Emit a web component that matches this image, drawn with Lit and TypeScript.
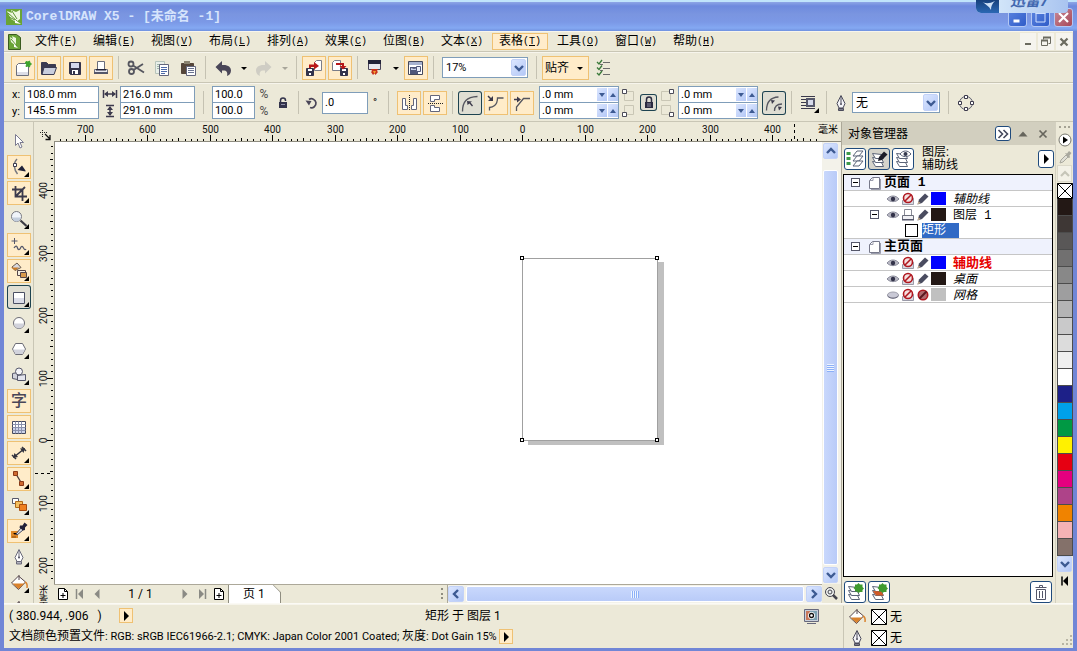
import { LitElement, html, svg, css, nothing } from "lit";
import { customElement, property, state } from "lit/decorators.js";
import { classMap } from "lit/directives/class-map.js";
import { styleMap } from "lit/directives/style-map.js";

const FLY = svg`<path d="M22 17v5h-5z" fill="#000"/>`;

const LAYERS = svg`<g fill="#fff" stroke="#5b6478" stroke-width="1">
  <path d="M5.500 14.500l3 5h8l-2-4z"/><path d="M5.500 10.500l3 5h8l-2-4z"/><path d="M5.500 6.500l3 5h8l-2-4z"/></g>`;

const STAR = svg`<path d="M15.500 3l1.500 1.500h2.500v2.500l1.500 1.500-1.500 1.500v2h-2.500L15.500 13l-1.500-1.500h-2v-2L10.500 8l1.500-1.500v-2h2z" fill="#3f9a2e"/>`;

const ICONS: Record<string, unknown> = {
  // standard toolbar
  new: svg`<path d="M5.500 9.500l2-2h10v12h-12z" fill="#fff" stroke="#6c6f7c"/><path d="M6 16h11v3H6z" fill="#dcdde6"/><path d="M15 5.500l2 .500 1.500-1 .500 2 1.500 1-1.500 1-.500 2-1.500-1-2 .500.500-2-1-1.500z" fill="#3da32c" stroke="#3da32c"/>`,
  open: svg`<path d="M4.500 18.500v-12h5l2 2h7v4" fill="#3a3a52" stroke="#3a3a52"/><path d="M5 18.500l2-7h12.500l-2.500 7z" fill="#c9cede" stroke="#3a3a52"/>`,
  save: svg`<path d="M6.500 6.500h11v12h-10l-1-1z" fill="#34344c" stroke="#34344c"/><path d="M8 7h8v5H8z" fill="#d4d8ee"/><path d="M9 14h6v4H9z" fill="#fff"/><path d="M10 15h2v3h-2z" fill="#34344c"/>`,
  print: svg`<path d="M8.500 14V5.500h7V14" fill="#fff" stroke="#6c6f7c"/><path d="M5.500 13.500h13v4h-13z" fill="#e8e8ee" stroke="#6c6f7c"/><path d="M5 16h14v2H5z" fill="#55576a"/><path d="M7 13h10v1.500H7z" fill="#24243a"/>`,
  cut: svg`<g fill="none" stroke="#55565f" stroke-width="1.800"><circle cx="7" cy="8" r="2.500"/><circle cx="7.500" cy="15.500" r="2.500"/><path d="M9 9.500l11 7M9.500 14L19 8"/></g>`,
  copy: svg`<g><path d="M5.500 5.500h9v12h-9z" fill="#e9efe9" stroke="#b7c4bb"/><path d="M7 8.500h5M7 10.500h5M7 12.500h5" stroke="#9fb5a8"/><path d="M9.500 8.500h9v11h-9z" fill="#fff" stroke="#63667c"/><path d="M11 11.500h6M11 13.500h6M11 15.500h6M11 17.500h4" stroke="#4d6aa8"/></g>`,
  paste: svg`<path d="M5.500 7.500h12v10h-12z" fill="#55463a" stroke="#55463a"/><path d="M8 5h6v3H8z" fill="#8a8370"/><path d="M10.500 10.500h9v9h-9z" fill="#fff" stroke="#63667c"/><path d="M12 12.500h6M12 14.500h6M12 16.500h6" stroke="#6a7390"/>`,
  undo: svg`<path d="M4.500 11l6.500-6v4c6-.500 9 2 9 5.500 0 3-2 5-4 5.500 1-4-.500-6-5-5.500v3z" fill="#4a4658"/>`,
  redo: svg`<path d="M19.500 11L13 5v4c-6-.500-9 2-9 5.500 0 3 2 5 4 5.500-1-4 .500-6 5-5.500v3z" fill="#cfcdc4"/>`,
  import: svg`<path d="M12.500 14.500v-8l2-2h5v10z" fill="#fff" stroke="#7b7d88"/><path d="M4.500 12.500h7v7h-7z" fill="#34344c" stroke="#34344c"/><path d="M6 13h4v2H6zM7 17h2v2H7z" fill="#fff"/><path d="M7 12V8.500h5V6l5 4-5 3.500V11H9v1z" fill="#b81818"/>`,
  export: svg`<path d="M4.500 14.500v-8l2-2h6v10z" fill="#fff" stroke="#7b7d88"/><path d="M12.500 12.500h7v7h-7z" fill="#34344c" stroke="#34344c"/><path d="M14 13h4v2h-4zM15 17h2v2h-2z" fill="#fff"/><path d="M8 7h8v3h2.500L15 13.500 11.500 10H14V9H8z" fill="#b81818"/>`,
  launch: svg`<path d="M5.500 4.500h12v9h-12z" fill="#e7e7f0" stroke="#4a4658"/><path d="M5 4h13v4H5z" fill="#22223a"/><path d="M8 13h7l-1 2 1 1-2.500 3-1-1.500L10 19l-2-3 1-1z" fill="#c8321c"/><path d="M10 15h3l-1.500 3z" fill="#f4a030"/>`,
  welcome: svg`<path d="M4.500 5.500h14v13h-14z" fill="#fff" stroke="#44485c"/><path d="M5 6h13v3H5z" fill="#a7b2cf"/><path d="M6 11h8v7H6z" fill="#50577a"/><path d="M7 12l3 1 4-1v2H7z" fill="#c8d2ea"/><path d="M12.500 10.500h4v5h-4z" fill="#e9edf8" stroke="#50577a"/>`,
  options: svg`<path d="M12 6.500h7M12 12.500h7M12 18.500h7" stroke="#6b6b6b"/><path d="M9 8.500h3M9 14.500h3" stroke="#6b6b6b"/><g fill="none" stroke="#3a7a3a" stroke-width="1.300"><path d="M6 6l2 2 3-4M6 11.500l2 2 3-4M6 17l2 2 3-4"/></g>`,
  // property bar
  width: svg`<path d="M5.500 8v8M18.500 8v8M7 12h10" stroke="#3c3a4c" fill="none" stroke-width="1.500"/><path d="M6 12l4-3v6zM18 12l-4-3v6z" fill="#3c3a4c"/>`,
  height: svg`<path d="M8 6.500h8M8 17.500h8M12 8v8" stroke="#3c3a4c" fill="none" stroke-width="1.500"/><path d="M12 7l-3 4h6zM12 17l-3-4h6z" fill="#3c3a4c"/>`,
  unlock: svg`<path d="M9.500 12V9.500a2.500 2.500 0 0 1 5 0v.500" fill="none" stroke="#34344c" stroke-width="1.500"/><path d="M8 11h8v6H8z" fill="#34344c"/><path d="M10 13.500h4" stroke="#8f8fa8"/>`,
  lock: svg`<path d="M9.500 11V8.500a2.500 2.500 0 0 1 5 0V11" fill="none" stroke="#2a2a40" stroke-width="1.500"/><path d="M8 11h8v6H8z" fill="#2a2a40"/><path d="M10 13h4M10 15h4" stroke="#8a8aa0"/>`,
  rotate: svg`<path d="M9 8.500a4.500 4.500 0 1 1 1 8" fill="none" stroke="#4a4658" stroke-width="1.700"/><path d="M5.500 9.500l6 .500-2.500 4.500z" fill="#4a4658"/>`,
  mirrorH: svg`<path d="M5.500 7.500h3v7h2v4h-5zM19.500 7.500h-3v7h-2v4h5z" fill="#fff" stroke="#63667c"/><path d="M12.500 4v16" stroke="#222" stroke-dasharray="1 1"/>`,
  mirrorV: svg`<path d="M7.500 4.500h9v4h-5v2h-4zM7.500 20.500h9v-4h-5v-2h-4z" fill="#fff" stroke="#63667c"/><path d="M5 12.500h15" stroke="#222" stroke-dasharray="1 1"/>`,
  round: svg`<path d="M4.500 20.500c0-10 4-14.500 15-15" fill="none" stroke="#55565f" stroke-width="1.300"/><path d="M9 10l5 .500-1.500 1 2.500 3-1 1-2.500-3-2 1.500z" fill="#3c3a4c"/>`,
  scallop: svg`<path d="M5.500 19.500v-3c3 0 8-2 8-9.500h6" fill="none" stroke="#55565f" stroke-width="1.300"/><path d="M4 5l3 3" stroke="#3c3a4c" stroke-width="1.500"/><path d="M9 5v5H4z" fill="#3c3a4c"/>`,
  chamfer: svg`<path d="M6.500 20v-4l7-8.500h6.500" fill="none" stroke="#55565f" stroke-width="1.300"/><path d="M4 8.500h4" stroke="#3c3a4c" stroke-width="1.500"/><path d="M7 5.500l4 3-4 3z" fill="#3c3a4c"/>`,
  relative: svg`<path d="M4.500 19.500c0-8 3-13 12-13.500M12.500 20c0-4 2-7 7.500-7" fill="none" stroke="#55565f" stroke-width="1.300"/><path d="M9 9l4 .500-3 3.500zM16 15.500l4 .500-3 3.500z" fill="#3c3a4c"/>`,
  wrap: svg`<path d="M4 5.500h14M4 8.500h5M4 11.500h5M4 14.500h5M4 17.500h14" stroke="#3c3a4c"/><path d="M10 8h7v7h-7z" fill="#d6daea" stroke="#55576a" stroke-width="2"/>${FLY}`,
  pen: svg`<path d="M12 4.500l4 8-2 4.500h-4l-2-4.500z" fill="#f4f4f8" stroke="#4a4a5a"/><path d="M12 6v6" stroke="#4a4a5a"/><circle cx="12" cy="13" r="1" fill="#4a4a5a"/><path d="M9.500 17.500h5v2h-5z" fill="#7c7c8a" stroke="#4a4a5a"/>`,
  curves: svg`<circle cx="12" cy="12" r="6.500" fill="none" stroke="#55576a"/><g fill="#fff" stroke="#3c3a4c"><path d="M10.500 4.500h3v3h-3zM10.500 16.500h3v3h-3zM4.500 10.500h3v3h-3zM16.500 10.500h3v3h-3z"/></g>`,
  // toolbox
  pick: svg`<path d="M8.500 5.500v11l2.500-2.500 2 5 2-1-2-4.500h3.500z" fill="#fff" stroke="#7b7b90"/>`,
  shape: svg`<path d="M10 4C6 8 7 15 10.500 19" fill="none" stroke="#77787f" stroke-width="1.500"/><path d="M6.500 8.500h3v3h-3z" fill="#fff" stroke="#3c3a4c"/><path d="M10.500 15l4.500-4.500 3.500 5v1z" fill="#22223a"/>${FLY}`,
  crop: svg`<path d="M8.500 5v10.500H20M5 8.500h10.500V20M9 15L18 6" fill="none" stroke="#3c3a4c" stroke-width="1.800"/>${FLY}`,
  zoom: svg`<path d="M13.500 13.500l6 5.500" stroke="#3c3c44" stroke-width="2.200"/><circle cx="9.500" cy="9.500" r="5" fill="#f0f4fa" stroke="#77787f"/><path d="M5.500 10.500a4 4 0 0 0 8 0z" fill="#c3cedd"/>${FLY}`,
  freehand: svg`<path d="M7.500 5v6M4.500 8h6" stroke="#55576a"/><path d="M7 15c2-3 3-2 3.500 0s2 2.500 3 0 2-2 3 0 2 2 2.500 1" fill="none" stroke="#55576a" stroke-width="1.300"/>${FLY}`,
  smartfill: svg`<path d="M5 8l5-4 4 4.500-6 3z" fill="#d9d9e0" stroke="#6a5a4a"/><path d="M4 8.500h8l-4 3z" fill="#c97b28"/><path d="M10.500 11.500h8v5h-8z" fill="#f4ede0" stroke="#55464a"/><path d="M13.500 13.500h6v5h-6z" fill="#d99a4c" stroke="#55464a"/>${FLY}`,
  rect: svg`<path d="M6.500 7.500h11v11h-11z" fill="#fff" stroke="#4b5064"/><path d="M7 13h10v5H7z" fill="#dbdde8"/>${FLY}`,
  ellipse: svg`<circle cx="12" cy="12" r="5.500" fill="#fff" stroke="#6b6b74"/><path d="M7 12.500a5 5 0 0 0 10 0z" fill="#d2d3dc"/>${FLY}`,
  polygon: svg`<path d="M5.500 12l3-5.500h7l3 5.500-3 5.500h-7z" fill="#fff" stroke="#6b6b74"/><path d="M6 12.500h12l-2.500 4.500h-7z" fill="#d2d3dc"/>${FLY}`,
  basic: svg`<path d="M5.500 10.500l5-1v7l-5-1z" fill="#d2d3dc" stroke="#55576a"/><circle cx="12" cy="8.500" r="3.500" fill="#f4f4f8" stroke="#55576a"/><path d="M10.500 12.500l8-1v6h-8z" fill="#e4e5ee" stroke="#55576a"/>${FLY}`,
  table: svg`<path d="M5.500 6.500h13v12h-13z" fill="#fff" stroke="#44485c"/><path d="M6 13h12v5H6z" fill="#cdd3ea"/><path d="M5.500 9.500h13M5.500 12.500h13M5.500 15.500h13M8.500 6.500v12M11.500 6.500v12M14.500 6.500v12" stroke="#8a90ac"/>`,
  dimension: svg`<path d="M7 16L17 8M5 14l4 4M15 6l4 4" stroke="#33333f" stroke-width="1.500"/><path d="M6 17l1.500-5 3.500 4zM18 7l-5 .500L16.500 12z" fill="#33333f"/>${FLY}`,
  connector: svg`<path d="M9 7l6 10" stroke="#4a3a3a" stroke-width="1.300"/><path d="M6.500 4.500h4v4h-4zM12.500 14.500h4v4h-4z" fill="#cf6a30" stroke="#8a3a18"/>${FLY}`,
  blend: svg`<path d="M5.500 5.500h6v5h-6z" fill="#fff" stroke="#55576a"/><path d="M8.500 8.500h7v6h-7z" fill="#f4c060" stroke="#b06a18"/><path d="M12.500 11.500h7v6h-7z" fill="#ef8020" stroke="#a84c10"/>${FLY}`,
  dropper: svg`<path d="M4 12h7v7H4z" fill="#e08a28"/><path d="M6 14l2 2 2-2M5 18h4" stroke="#8a4a10"/><path d="M9 15l5-6 2 2-6 5z" fill="#dfe3ea" stroke="#44485c"/><path d="M13 6.500l2.500 0 2-3 3 2.500-2.500 2.500v2.500l-2 .500-3.500-3z" fill="#22223a"/>${FLY}`,
  outline: svg`<path d="M12 4.500l4 8-2 4h-4l-2-4z" fill="#fff" stroke="#6a6a7a"/><path d="M12 6v6" stroke="#6a6a7a"/><circle cx="12" cy="12.500" r="1" fill="#4a4a5a"/><path d="M9.500 16.500h5v2.500h-5z" fill="#b4b4c0" stroke="#6a6a7a"/>${FLY}`,
  fill: svg`<path d="M4.500 12l7-7 7 6-7 7.500z" fill="#fff" stroke="#55464a"/><path d="M5.500 12.500h12l-6 5.500z" fill="#d9822c"/><path d="M12 4v5" stroke="#55464a"/><path d="M18 11c2 1 2.500 3 2 6" fill="none" stroke="#d9822c" stroke-width="1.500"/>`,
  fillTool: svg`<path d="M4.500 12l7-7 7 6-7 7.500z" fill="#fff" stroke="#55464a"/><path d="M5.500 12.500h12l-6 5.500z" fill="#d9822c"/><path d="M12 4v5" stroke="#55464a"/><path d="M18 11c2 1 2.500 3 2 6" fill="none" stroke="#d9822c" stroke-width="1.500"/>${FLY}`,
  // docker
  dockProps: svg`${[5, 10, 15].map((y) => svg`<path d="M3.500 ${y}h4v3h-4z" fill="#3d9a4a"/><path d="M10 ${y + 4}l4-5h6l-4 5z" fill="#fff" stroke="#5b6478"/>`)}`,
  dockEdit: svg`${LAYERS}<path d="M11 14l1-4 5-5.500 3.500 3-5.500 5.500z" fill="#1c1c28"/>`,
  dockView: svg`${LAYERS}<path d="M9 7c3-4 8-4 11 0-3 3.500-8 3.500-11 0z" fill="#fff" stroke="#5b6478"/><circle cx="14.500" cy="7" r="2" fill="#33384c"/>`,
  newLayer: svg`${LAYERS}${STAR}`,
  newMaster: svg`${LAYERS}<path d="M6 11l3 4.500h7.500l-2-4z" fill="#cf5a28"/>${STAR}`,
  trash: svg`<path d="M6.500 7.500h11M10.500 7V5.500h3V7" fill="none" stroke="#55576a"/><path d="M7.500 9.500h9v10h-9z" fill="#fff" stroke="#55576a"/><path d="M10.500 11v7M13.500 11v7" stroke="#55576a"/>`,
  page: svg`<path d="M6.500 9.500l3-3h7v11h-10z" fill="#fff" stroke="#77798a"/><path d="M7 9.500h3V7" fill="none" stroke="#9a9cac"/><path d="M8 18.500h9.500V8" fill="none" stroke="#9a9cac"/>`,
  eye: svg`<path d="M6 12c3-4 9-4 12 0-3 3.500-9 3.500-12 0z" fill="#b9b9c4" stroke="#8a8b9a"/><circle cx="12" cy="12" r="2.200" fill="#33334a"/>`,
  eyeShut: svg`<ellipse cx="12" cy="12" rx="5.500" ry="3" fill="#c9c9d6" stroke="#a0a0ac"/><path d="M6.500 13c3 3 8 3 11 0" fill="none" stroke="#66667a"/>`,
  noPrint: svg`<path d="M6.500 17.500v-4l3-2h8v6z" fill="#d8d8e0" stroke="#9a9aa8"/><circle cx="12" cy="11" r="4.500" fill="#f4e0e0" stroke="#b01820" stroke-width="1.600"/><path d="M15 8l-6 6" stroke="#b01820" stroke-width="1.600"/>`,
  printer: svg`<path d="M8.500 12V6.500h7V12" fill="#fff" stroke="#8a8c98"/><path d="M6.500 12.500h11v4h-11z" fill="#f0f0f4" stroke="#6c6f7c"/><path d="M6 16h12v1.500H6z" fill="#55576a"/>`,
  pencil: svg`<path d="M6.500 17.500l1.500-5L14 6.500l3.500 3-6.500 6.500z" fill="#4a4c60"/><path d="M6.500 17.500l1-3 2 1.500z" fill="#c8b090"/>`,
  noEdit: svg`<circle cx="12" cy="12" r="4.700" fill="#b06a70" stroke="#b01820" stroke-width="1.600"/><path d="M15.500 8.500l-7 7" stroke="#5a1820" stroke-width="2"/>`,
  // misc
  origin: svg`<path d="M8.500 8v7M6 10.500h8" stroke="#222" stroke-dasharray="1 1"/><path d="M11 12l5 5M16 13v4.500h-4.500" fill="none" stroke="#111" stroke-width="1.300"/>`,
  addPage: svg`<path d="M7.500 6.500h6l3 3v8h-9z" fill="#fff" stroke="#000"/><path d="M13.500 6.500v3h3M9.500 13.500h5M12 11v5" fill="none" stroke="#000"/>`,
  first: svg`<path d="M8.500 7v10" stroke="#8a8a84" stroke-width="1.500"/><path d="M15 7v10l-5-5z" fill="#8a8a84"/>`,
  prev: svg`<path d="M14.500 7v10l-5-5z" fill="#8a8a84"/>`,
  next: svg`<path d="M9.500 7v10l5-5z" fill="#8a8a84"/>`,
  last: svg`<path d="M15.500 7v10" stroke="#8a8a84" stroke-width="1.500"/><path d="M9 7v10l5-5z" fill="#8a8a84"/>`,
  play: svg`<path d="M10 7v10l5-5z" fill="#000"/>`,
  start: svg`<path d="M9 7.500v9" stroke="#000" stroke-width="1.500"/><path d="M15 7v10l-5-5z" fill="#000"/>`,
  nav: svg`<circle cx="11" cy="11" r="4.500" fill="#eef0ee" stroke="#44444c"/><circle cx="11" cy="11" r="2" fill="none" stroke="#44444c"/><path d="M14 14l4 4" stroke="#44444c" stroke-width="2.500"/>`,
  down: svg`<path d="M8 10l4 4 4-4" fill="none" stroke="#3d5a92" stroke-width="2.400"/>`,
  up: svg`<path d="M8 14l4-4 4 4" fill="none" stroke="#3d5a92" stroke-width="2.400"/>`,
  left: svg`<path d="M14 8l-4 4 4 4" fill="none" stroke="#3d5a92" stroke-width="2.400"/>`,
  right: svg`<path d="M10 8l4 4-4 4" fill="none" stroke="#3d5a92" stroke-width="2.400"/>`,
  caret: svg`<path d="M9 11h6l-3 3z" fill="#000"/>`,
  caretOff: svg`<path d="M9 11h6l-3 3z" fill="#a8a69a"/>`,
  spinD: svg`<path d="M9 10h6l-3 4z" fill="#3d5a92"/>`,
  spinU: svg`<path d="M9 14h6l-3-4z" fill="#3d5a92"/>`,
  min: svg`<path d="M8 15.500h6" stroke="#fff" stroke-width="3"/>`,
  max: svg`<path d="M7.500 7.500h9v9h-9z" fill="none" stroke="#cfe0ff"/><path d="M7 7.500h10" stroke="#cfe0ff" stroke-width="2"/>`,
  close: svg`<path d="M7.500 7.500l9 9M16.500 7.500l-9 9" stroke="#fff" stroke-width="2.200"/>`,
  mdiMin: svg`<path d="M9 14h6" stroke="#6b6b60" stroke-width="2"/>`,
  mdiMax: svg`<path d="M9.500 9.500v-2h7v6h-2M7.500 10.500h6v5h-6z" fill="none" stroke="#6b6b60"/><path d="M7 10.500h7M9 7.500h8" stroke="#6b6b60" stroke-width="2"/>`,
  mdiClose: svg`<path d="M8.500 8.500l7 7M15.500 8.500l-7 7" stroke="#6b6b60" stroke-width="2.200"/>`,
  collapse: svg`<path d="M7.500 8l4 4-4 4M12.500 8l4 4-4 4" fill="none" stroke="#44485c" stroke-width="1.600"/>`,
  rollup: svg`<path d="M7.500 14.500h9l-4.500-5z" fill="#66655c"/>`,
  dockClose: svg`<path d="M8.500 8.500l7 7M15.500 8.500l-7 7" stroke="#66655c" stroke-width="1.700"/>`,
  round2: svg`<circle cx="12" cy="12" r="6" fill="#fff" stroke="#77776e"/><path d="M10 8.500v7l5-3.500z" fill="#000"/>`,
  eyedrop: svg`<path d="M7 18l1-3 5-5 2 2-5 5z" fill="#e0dfd6" stroke="#a9a89e"/><path d="M12 8l2 .500L16 6l2.500 2-2 2.500.500 2-1.500.500z" fill="#a9a89e"/>`,
  upOff: svg`<path d="M8 14l4-4 4 4" fill="none" stroke="#c6c5b8" stroke-width="2.200"/>`,
  none: svg`<path d="M4.500 4.500h15v15h-15z" fill="#fff" stroke="#000"/><path d="M4.500 4.500l15 15M19.500 4.500l-15 15" stroke="#000"/>`,
  proof: svg`<path d="M5.500 5.500h14v12h-14z" fill="#c9d0dc" stroke="#66687c"/><path d="M7 7h11v9H7z" fill="#7aa0b0"/><path d="M7 7h4v9H7z" fill="#c8785c"/><circle cx="12.500" cy="11.500" r="3.500" fill="#fff"/><circle cx="12.500" cy="11.500" r="2" fill="none" stroke="#111" stroke-width="1.300"/><path d="M8 19.500h9" stroke="#66687c"/>`,
  grip: svg`<g fill="#b8b5a4"><path d="M18 8h2v2h-2zM14 12h2v2h-2zM18 12h2v2h-2zM10 16h2v2h-2zM14 16h2v2h-2zM18 16h2v2h-2z"/></g>`,
  logo: svg`<path d="M4 4h16v16H4z" fill="#6aa436"/><path d="M5 6l5 2-1-3 5 2 4-2v9l-4 3-5-3z" fill="#eef7e0"/><path d="M6 8l9 8M10 6l5 8M7 12l6 3" stroke="#5c9430"/><path d="M13 15l6 4-6-1z" fill="#fff"/>`,
  doc: svg`<path d="M6.500 4.500h8l4 3v12h-12z" fill="#6aa436" stroke="#3a5a20"/><path d="M8 7l3 2-1-3 4 2v8l-5-4z" fill="#eef7e0"/><path d="M9 9l6 7" stroke="#5c9430"/><path d="M12 14l4 4-4-1z" fill="#fff"/>`,
};

const icon = (name: string, size = 24) =>
  html`<svg class="ic" width=${size} height=${size} viewBox=${size >= 24 ? "0 0 24 24" : `${(24 - size) / 2} ${(24 - size) / 2} ${size} ${size}`} aria-hidden="true">${ICONS[name]}</svg>`;

const shared = css`
  *, *::before, *::after { box-sizing: border-box; }
  button, input, select { font: inherit; color: inherit; margin: 0; border-radius: 0; }
  button { padding: 0; border: 0; background: none; display: flex; align-items: center; justify-content: center; flex: none; }
  .ic { display: block; flex: none; }
  .mono { font-family: "Liberation Mono", "Noto Sans CJK SC", monospace; }
  .xp { background: linear-gradient(135deg, #dbe6ff, #b4c8f6); border: 1px solid #c3d2f8; border-radius: 2px; }
  .tool { width: 24px; height: 24px; }
  .tool.hot { background: #ffecc9; box-shadow: inset 0 0 0 1px #efc173; }
  .tool.on { background: #dfded3; box-shadow: inset 0 0 0 1px #1d4350; border-radius: 3px; }
`;

const UNIT = 62.5;

/** Ruler strip whose ticks are spaced every ten document units. */
@customElement("draw-ruler")
export class DrawRuler extends LitElement {
  @property({ type: Boolean }) vertical = false;
  @property({ type: Number }) zero = 0;
  @property({ type: Number }) cursor = 0;

  static styles = css`
    :host { display: block; overflow: hidden; min-width: 0; min-height: 0; background: #ece9d8; position: relative; }
    .strip { position: absolute; left: 0; top: 0; display: block; font-family: Roboto, sans-serif; font-size: 10px; fill: #111; }
    .tick { stroke: #000; shape-rendering: crispEdges; }
  `;

  render() {
    const v = this.vertical;
    const span = 1600;
    const items: unknown[] = [];
    const from = -Math.floor(this.zero / (UNIT / 10));
    for (let i = from; i * (UNIT / 10) + this.zero < span; i++) {
      const p = Math.round(this.zero + (i * UNIT) / 10) + 0.5;
      const len = i % 10 === 0 ? 6 : i % 5 === 0 ? 3 : 2;
      items.push(v
        ? svg`<path class="tick" d="M${19 - len} ${p}H19"/>`
        : svg`<path class="tick" d="M${p} ${19 - len}V19"/>`);
      if (i % 10 === 0) {
        const label = String(Math.abs(i * 10));
        items.push(v
          ? svg`<text transform="translate(13 ${p}) rotate(-90)" text-anchor="middle">${label}</text>`
          : svg`<text x=${p} y="11" text-anchor="middle">${label}</text>`);
      }
    }
    const c = this.cursor + 0.5;
    return html`<svg class="strip" width=${v ? 20 : span} height=${v ? span : 20}>
      ${items}
      ${v ? svg`<path class="tick" d="M1 ${c}H19" stroke-dasharray="3 3"/>` : svg`<path class="tick" d="M${c} 2V19" stroke-dasharray="3 3"/>`}
    </svg>`;
  }
}

interface Layer {
  label: string;
  kind: "page" | "layer" | "object";
  open?: boolean;
  eye?: string;
  print?: string;
  edit?: string;
  color?: string;
  style?: string;
}

const TREE: Layer[] = [
  { label: "页面 1", kind: "page", open: true },
  { label: "辅助线", kind: "layer", eye: "eye", print: "noPrint", edit: "pencil", color: "#0000ff", style: "slant" },
  { label: "图层 1", kind: "layer", open: true, eye: "eye", print: "printer", edit: "pencil", color: "#231815" },
  { label: "矩形", kind: "object" },
  { label: "主页面", kind: "page", open: true },
  { label: "辅助线", kind: "layer", eye: "eye", print: "noPrint", edit: "pencil", color: "#0000ff", style: "alert" },
  { label: "桌面", kind: "layer", eye: "eye", print: "noPrint", edit: "pencil", color: "#231815", style: "slant" },
  { label: "网格", kind: "layer", eye: "eyeShut", print: "noPrint", edit: "noEdit", color: "#c0c0c0", style: "slant" },
];

/** Object manager docker. */
@customElement("object-docker")
export class ObjectDocker extends LitElement {
  static styles = [shared, css`
    :host { display: flex; flex-direction: column; width: 214px; flex: none; border-left: 1px solid #aca899; background: #ece9d8; }
    .head { height: 23px; background: #d2cfbf; display: flex; align-items: center; padding: 0 2px 0 6px; flex: none; }
    .name { flex: 1; font-size: 12px; line-height: 18px; }
    .head button { width: 20px; height: 18px; }
    .head .box { width: 16px; height: 15px; background: #fff; border: 1px solid #1f4a7c; border-radius: 3px; margin-right: 2px; }
    .bar { display: flex; align-items: center; height: 29px; padding: 0 1px 2px 2px; flex: none; gap: 2px; }
    .btn { width: 22px; height: 22px; background: #fff; border: 1px solid #1f4a7c; border-radius: 3px; overflow: hidden; }
    .btn.on { background: #d5d4cc; }
    .layer { flex: 1; padding-left: 6px; display: grid; grid-auto-rows: 13px; align-items: center; line-height: 18px; }
    .btn.go { width: 16px; height: 18px; }
    .tree { list-style: none; margin: 0 2px 0 1px; padding: 0; border: 1px solid #000; background: #fff; flex: 1; overflow: hidden; }
    .row { height: 16px; display: flex; align-items: center; padding-left: 42px; border-bottom: 1px solid #c6c6c6; }
    .row.page { background: #eff2fd; font-weight: bold; font-size: 13px; }
    .row.open { padding-left: 26px; }
    .row.page.open { padding-left: 7px; }
    .row.object { padding-left: 61px; }
    .row:nth-child(3) { border-bottom-color: #fff; }
    .label { line-height: 18px; }
    .row.layer-row .label { padding-top: 2px; }
    .exp { width: 9px; height: 9px; border: 1px solid #55576a; background: #fff; margin-right: 7px; }
    .exp::before { content: ""; width: 5px; height: 1px; background: #000; }
    .chip { width: 15px; height: 13px; margin: 0 7px 0 1px; }
    .slant { font-style: italic; }
    .alert { color: #e60000; font-weight: bold; font-size: 13px; }
    .square { width: 13px; height: 13px; border: 1px solid #000; background: #fff; margin-right: 4px; }
    .picked { background: #316ac5; color: #fff; width: 37px; height: 15px; display: flex; align-items: center; }
    .pg { margin-right: 1px; }
    .foot { display: flex; justify-content: space-between; align-items: flex-end; height: 26px; padding: 0 3px 0 2px; flex: none; }
    .set { display: flex; gap: 2px; }
  `];

  render() {
    return html`
      <div class="head"><span class="name">对象管理器</span>
        <button class="box" aria-label="折叠">${icon("collapse", 14)}</button>
        <button aria-label="卷起">${icon("rollup", 18)}</button>
        <button aria-label="关闭">${icon("dockClose", 18)}</button></div>
      <div class="bar">
        <button class="btn" aria-label="显示对象属性">${icon("dockProps", 20)}</button>
        <button class="btn on" aria-label="跨图层编辑">${icon("dockEdit", 20)}</button>
        <button class="btn" aria-label="图层管理器视图">${icon("dockView", 20)}</button>
        <div class="layer"><span>图层:</span><span>辅助线</span></div>
        <button class="btn go" aria-label="选项">${icon("play", 14)}</button></div>
      <ul class="tree mono">
        ${TREE.map((n) => html`<li class=${classMap({ row: true, page: n.kind === "page", "layer-row": n.kind === "layer", object: n.kind === "object", open: !!n.open })}>
          ${n.open ? html`<button class="exp" aria-label="折叠"></button>` : nothing}
          ${n.kind === "page" ? html`<span class="pg">${icon("page", 16)}</span>` : nothing}
          ${n.kind === "layer" ? html`
            ${icon(n.eye!, 14)}${icon(n.print!, 16)}${icon(n.edit!, 14)}
            <span class="chip" style=${styleMap({ background: n.color! })}></span>
            <span class="label ${n.style ?? ""}">${n.label}</span>` : nothing}
          ${n.kind === "page" ? html`<span class="label">${n.label}</span>` : nothing}
          ${n.kind === "object" ? html`<span class="square"></span><span class="picked"><span class="label">${n.label}</span></span>` : nothing}
        </li>`)}
      </ul>
      <div class="foot">
        <span class="set"><button class="btn" aria-label="新建图层">${icon("newLayer", 20)}</button>
          <button class="btn" aria-label="新建主图层">${icon("newMaster", 20)}</button></span>
        <button class="btn" aria-label="删除">${icon("trash", 20)}</button></div>`;
  }
}

const SWATCHES = ["#231815", "#3e3735", "#595757", "#717070", "#888888", "#9e9e9f", "#b4b4b5", "#c9c9ca", "#dcdcdc", "#efefef", "#ffffff",
  "#1d2088", "#00a0e9", "#009944", "#fff100", "#e60012", "#e4007f", "#ae4389", "#f08300", "#f4b2b5", "#84716a"];

/** Vertical colour palette on the right edge. */
@customElement("color-palette")
export class ColorPalette extends LitElement {
  static styles = [shared, css`
    :host { display: flex; flex-direction: column; align-items: center; width: 18px; flex: none; border-left: 1px solid #d3d0c0; padding-top: 4px; background: #ece9d8; overflow: hidden; }
    .dots { width: 11px; border-top: 2px dotted #a5a294; height: 5px; flex: none; }
    .off { width: 15px; height: 17px; border: 1px solid #dcd9ca; background: #f3f1e7; overflow: hidden; }
    .mid { width: 16px; height: 17px; overflow: hidden; }
    .sw { width: 16px; height: 17px; border: 1px solid #4c4c4c; border-top: 0; }
    .dn { width: 15px; height: 16px; overflow: hidden; }
  `];
  render() {
    return html`<span class="dots"></span>
      <button class="mid" aria-label="调色板菜单">${icon("round2", 16)}</button>
      <button class="mid" aria-label="滴管">${icon("eyedrop", 16)}</button>
      <button class="off" aria-label="向上">${icon("upOff", 14)}</button>
      <button class="mid" aria-label="无填充">${icon("none", 16)}</button>
      ${SWATCHES.map((c) => html`<button class="sw" aria-label=${c} style=${styleMap({ background: c })}></button>`)}
      <button class="xp dn" aria-label="向下">${icon("down", 14)}</button>
      <button class="mid" aria-label="展开">${icon("start", 16)}</button>`;
  }
}

const MENUS: [string, string][] = [["文件", "F"], ["编辑", "E"], ["视图", "V"], ["布局", "L"], ["排列", "A"], ["效果", "C"],
  ["位图", "B"], ["文本", "X"], ["表格", "T"], ["工具", "O"], ["窗口", "W"], ["帮助", "H"]];

const TOOLS: [string, string, string?][] = [["pick", "挑选"], ["shape", "形状", "hot"], ["crop", "裁剪", "hot"], ["zoom", "缩放"],
  ["freehand", "手绘", "hot"], ["smartfill", "智能填充", "hot"], ["rect", "矩形", "on"], ["ellipse", "椭圆形"], ["polygon", "多边形"],
  ["basic", "基本形状"], ["text", "文本", "hot"], ["table", "表格", "hot"], ["dimension", "度量", "hot"], ["connector", "连接器", "hot"],
  ["blend", "调和"], ["dropper", "滴管", "hot"], ["outline", "轮廓"], ["fillTool", "填充"]];

@customElement("app-root")
export class AppRoot extends LitElement {
  @state() private tool = "rect";

  static styles = [shared, css`
    :host { display: flex; flex-direction: column; height: 100vh; min-height: 400px; position: relative; overflow: hidden; cursor: default;
      font: 12px/16px Roboto, "Noto Sans CJK SC", sans-serif; color: #000; background: #7186d6; padding: 0 4px 3px; box-sizing: border-box; }
    .title { height: 31px; margin: 0 -4px; padding: 0 4px 0 2px; display: flex; align-items: center; flex: none; border-top: 2px solid #c0e4fb;
      background: linear-gradient(#8ea6e6 0, #6e8ade 4px, #7a95e0 12px, #7b98e6 20px, #84a8f2 26px, #7092e0 29px); }
    .caption { flex: 1; margin: 0; font-size: 13px; line-height: 20px; font-weight: bold; color: #d6e4fc; white-space: pre; }
    .wins { display: flex; gap: 4px; padding-top: 2px; }
    .win { width: 19px; height: 19px; border: 1px solid #b4c8f4; border-radius: 3px; background: linear-gradient(135deg, #5c84e0, #2f5cc8); }
    .win.x { background: linear-gradient(135deg, #c88a98, #a84858); }
    .menu { height: 21px; display: flex; align-items: center; flex: none; background: #ece9d8; border-top: 1px solid #f7f5ec; border-bottom: 1px solid #c9c6b5; padding: 0 1px 0 0; }
    .menu .doc { width: 24px; overflow: hidden; display: flex; justify-content: center; padding-right: 4px; }
    .mi { width: 56px; height: 17px; margin-right: 2px; white-space: nowrap; line-height: 17px; }
    .mi .mono { font-size: 10px; }
    .mi.hot { background: #ffeccb; box-shadow: inset 0 0 0 1px #efc173; }
    .grow { flex: 1; }
    .mdi { width: 16px; height: 17px; background: #f5f4ee; margin-left: 2px; overflow: hidden; }
    .bar { display: flex; align-items: center; gap: 2px; padding-left: 7px; background: #ece9d8; flex: none; border-top: 1px solid #f7f5ec; border-bottom: 1px solid #c9c6b5; overflow: hidden; }
    .std { height: 31px; }
    .prop { height: 39px; padding-left: 8px; font-size: 11px; }
    .sep { width: 1px; height: 23px; background: #c5c2b2; margin: 0 3px; flex: none; }
    .sep.wide { margin: 0 6px; }
    .drop { width: 13px; height: 24px; overflow: hidden; }
    .combo { position: relative; height: 21px; border: 1px solid #7f9db9; background: #fff; display: flex; margin: 0 3px; flex: none; }
    .combo select { appearance: none; border: 0; background: none; width: 100%; padding: 0 20px 0 3px; outline: 0; }
    .combo .arrow { position: absolute; right: 1px; top: 1px; width: 15px; height: 17px; display: flex; align-items: center; justify-content: center; overflow: hidden; pointer-events: none; }
    .w86 { width: 86px; font-size: 11px; }
    .w88 { width: 88px; font-size: 12px; margin-left: 0; }
    .snap { width: 47px; height: 24px; background: #ffecc9; box-shadow: inset 0 0 0 1px #efc173; padding-left: 3px; overflow: hidden; line-height: 20px; }
    .snap .ic { margin-left: 2px; }
    .pair { display: grid; grid-auto-rows: 17px; flex: none; }
    .fields { border: 1px solid #7f9db9; background: #fff; grid-template-rows: 15px 16px; }
    .fields .f + .f { border-top: 1px solid #7f9db9; }
    .f { display: flex; min-width: 0; }
    .f input, .angle { border: 0; background: none; padding: 0 0 0 2px; width: 100%; min-width: 0; outline: 0; }
    .fields .f { height: 16px; }
    .f75 { width: 75px; } .f42 { width: 43px; } .f80 { width: 80px; }
    .tag { width: 10px; } .tag label { line-height: 17px; }
    .icos { width: 17px; justify-items: center; }
    .pct { width: 14px; color: #4c4c4c; justify-items: center; font-size: 12px; }
    .angle { width: 46px; height: 22px; border: 1px solid #7f9db9; background: #fff; flex: none; }
    .spin { width: 10px; height: 13px; margin: 1px 0 0 1px; overflow: hidden; background: linear-gradient(135deg, #dbe6ff, #b4c8f6); }
    .corner { width: 17px; flex: none; }
    .slim { width: 20px; overflow: hidden; }
    .lockbtn { width: 17px; height: 17px; overflow: hidden; }
    .m3 { margin: 0 3px; } .ml3 { margin-left: 3px; } .ml2 { margin-left: 2px; }
    .main { flex: 1; display: flex; min-height: 0; border-bottom: 1px solid #fbfaf5; background: #ece9d8; }
    .toolbox { width: 30px; flex: none; padding: 7px 3px 0; display: flex; flex-direction: column; gap: 2px; border-right: 1px solid #c9c6b5; overflow: hidden; }
    .zi { font-size: 16px; line-height: 24px; font-weight: 500; color: #4a4658; }
    .work { flex: 1; min-width: 0; display: grid; grid-template: 20px 1fr 19px / 20px 1fr 19px; }
    .corner0 { overflow: hidden; }
    .hrule { display: grid; grid-template-columns: 1fr auto; grid-column: 2 / 4; min-width: 0; border-bottom: 1px solid #8f8d80; }
    .unit { font-size: 10px; line-height: 15px; padding-right: 3px; }
    .canvas { background: #fff; border-left: 1px solid #8f8d80; position: relative; overflow: hidden; }
    .vrule { min-height: 0; grid-row: 2 / 4; display: grid; grid-template-rows: 1fr auto; }
    .vunit { font-size: 9px; line-height: 20px; writing-mode: vertical-rl; transform: rotate(180deg); height: 19px; }
    .sheet { position: absolute; left: 467px; top: 116px; width: 136px; height: 183px; border: 1px solid #a0a0a0; background: #fff; box-shadow: 6px 4px 0 #c0c0c0; }
    .h { position: absolute; width: 4px; height: 4px; border: 1px solid #000; background: #fff; }
    .tl { left: -3px; top: -3px; } .tr { right: -2px; top: -3px; } .bl { left: -3px; bottom: -2px; } .br { right: -2px; bottom: -2px; }
    .vs { display: flex; flex-direction: column; align-items: center; background: #f3f2ea; gap: 2px; padding: 1px 2px 1px 0; }
    .sb { width: 15px; height: 16px; overflow: hidden; }
    .thumb { background: linear-gradient(90deg, #c9d8fc, #b9cbf8); border: 1px solid #fff; border-radius: 2px; display: flex; align-items: center; justify-content: center; }
    .vs .thumb { width: 15px; flex: 1; margin-top: 9px; }
    .rib { width: 7px; height: 8px; background: repeating-linear-gradient(#eef4fe 0 1px, #8cb0f8 1px 2px); }
    .rib.v { width: 8px; height: 7px; background: repeating-linear-gradient(90deg, #eef4fe 0 1px, #8cb0f8 1px 2px); }
    .nav { display: flex; min-width: 0; border-top: 1px solid #aca899; align-items: stretch; }
    .nav button { width: 17px; }
    .count { width: 71px; text-align: center; line-height: 18px; }
    .tab { width: 53px; margin-left: 1px; background: #8f8d80; clip-path: polygon(0 0, 86% 0, 100% 40%, 100% 100%, 0 100%); display: flex; padding: 0 1px 0 1px; }
    .tab span { flex: 1; background: #fff; clip-path: polygon(0 0, 86% 0, 100% 40%, 100% 100%, 0 100%); padding-left: 14px; line-height: 18px; }
    .split { width: 3px; height: 11px; margin: 3px; border-left: 2px dotted #8f8d80; }
    .hs { display: flex; width: 375px; flex: none; background: #f3f2ea; gap: 2px; border-left: 1px solid #aca899; align-items: center; }
    .hs .sb { width: 16px; height: 16px; }
    .hs .thumb { flex: 1; height: 16px; background: linear-gradient(#c9d8fc, #b9cbf8); }
    .status { height: 44px; flex: none; display: flex; background: #ece9d8; border-top: 1px solid #f7f5ec; overflow: hidden; }
    .left { flex: 1; min-width: 0; padding: 0 0 0 5px; }
    .line { display: grid; grid-template-columns: 110px 306px 1fr; height: 21px; align-items: center; white-space: pre; line-height: 20px; }
    .line.two { display: flex; font-size: 11px; gap: 2px; }
    .zh { font-size: 12px; }
    .go { width: 14px; height: 15px; background: #ffecc9; border: 1px solid #efc173; overflow: hidden; }
    .pr { width: 42px; padding-top: 1px; }
    .fills { width: 230px; display: flex; justify-content: space-between; align-items: flex-end; padding-top: 1px; }
    .fills dl { margin: 0; display: grid; grid-template-columns: 26px 20px 24px; grid-auto-rows: 21px; align-items: center; align-self: flex-start; border-left: 1px solid #c9c6b5; line-height: 20px; }
    .fills dt, .fills dd { margin: 0; display: flex; justify-content: flex-start; }
    .fills dt { justify-content: center; }
    .badge { position: absolute; right: 9px; top: 0; width: 92px; height: 13px; display: flex; background: linear-gradient(90deg, #dff0fc, #a9c4f0); border-radius: 0 0 4px 5px; overflow: hidden; }
    .badge b { background: linear-gradient(#16407c, #2a68b4); width: 23px; flex: none; display: flex; }
    .badge span { font-size: 15px; font-style: italic; font-weight: bold; color: #4268b0; line-height: 2px; padding-left: 11px; }
    .grip { overflow: hidden; }
  `];

  private btn(name: string, label: string, kind = "") {
    return html`<button class="tool ${kind}" aria-label=${label}>${icon(name)}</button>`;
  }

  private spinField(label: string) {
    return html`<div class="f"><input aria-label=${label} .value=${".0 mm"}>
      <button class="spin" aria-label="减少">${icon("spinD", 10)}</button><button class="spin" aria-label="增加">${icon("spinU", 10)}</button></div>`;
  }

  private corners(side: "l" | "r") {
    const x = side === "l" ? 1.5 : 10.5;
    const o = side === "l" ? 3.5 : 2.5;
    return html`<svg class="corner" width="17" height="34" aria-hidden="true">
      <path d="M${o} 5.500h9v9h-9zM${o} 19.500h9v9h-9z" fill="none" stroke="#c9c6b5"/>
      <path d="M${x} 3.500h4v4h-4zM${x} 26.500h4v4h-4z" fill="#fff" stroke="#4b4b58"/></svg>`;
  }

  render() {
    return html`
      <header class="title">${icon("logo")}<h1 class="caption mono">CorelDRAW X5 - [未命名 -1]</h1>
        <div class="wins"><button class="win" aria-label="最小化">${icon("min", 17)}</button><button class="win" aria-label="最大化">${icon("max", 17)}</button>
          <button class="win x" aria-label="关闭">${icon("close", 17)}</button></div></header>

      <nav class="menu"><span class="doc">${icon("doc", 20)}</span>
        ${MENUS.map(([t, k]) => html`<button class=${classMap({ mi: true, hot: k === "T" })}>${t}<span class="mono">(<u>${k}</u>)</span></button>`)}
        <span class="grow"></span>
        <button class="mdi" aria-label="最小化文档">${icon("mdiMin", 16)}</button><button class="mdi" aria-label="还原文档">${icon("mdiMax", 16)}</button>
        <button class="mdi" aria-label="关闭文档">${icon("mdiClose", 16)}</button></nav>

      <div class="bar std">
        ${this.btn("new", "新建", "hot")}${this.btn("open", "打开", "hot")}${this.btn("save", "保存", "hot")}${this.btn("print", "打印", "hot")}
        <i class="sep"></i>${this.btn("cut", "剪切")}${this.btn("copy", "复制")}${this.btn("paste", "粘贴")}
        <i class="sep"></i>${this.btn("undo", "撤消")}<button class="drop" aria-label="撤消列表">${icon("caret")}</button>
        ${this.btn("redo", "重做")}<button class="drop" aria-label="重做列表">${icon("caretOff")}</button>
        <i class="sep"></i>${this.btn("import", "导入", "hot")}${this.btn("export", "导出", "hot")}
        <i class="sep"></i>${this.btn("launch", "应用程序启动器")}<button class="drop" aria-label="启动器列表">${icon("caret")}</button>
        ${this.btn("welcome", "欢迎屏幕", "hot")}
        <i class="sep"></i><span class="combo w86"><select aria-label="缩放级别"><option>17%</option></select><span class="arrow xp">${icon("down", 14)}</span></span>
        <i class="sep"></i><button class="snap">贴齐${icon("caret", 18)}</button>${this.btn("options", "选项")}
      </div>

      <div class="bar prop">
        <div class="pair tag"><label for="px">x:</label><label for="py">y:</label></div>
        <div class="pair fields f75"><div class="f"><input id="px" .value=${"108.0 mm"}></div><div class="f"><input id="py" .value=${"145.5 mm"}></div></div>
        <div class="pair icos">${icon("width", 16)}${icon("height", 16)}</div>
        <div class="pair fields f75"><div class="f"><input aria-label="宽度" .value=${"216.0 mm"}></div><div class="f"><input aria-label="高度" .value=${"291.0 mm"}></div></div>
        <i class="sep wide"></i>
        <div class="pair fields f42"><div class="f"><input aria-label="水平缩放" .value=${"100.0"}></div><div class="f"><input aria-label="垂直缩放" .value=${"100.0"}></div></div>
        <div class="pair pct"><span>%</span><span>%</span></div>
        <button class="tool slim" aria-label="锁定比率">${icon("unlock", 20)}</button><i class="sep"></i>
        ${icon("rotate", 16)}<input class="angle" aria-label="旋转角度" .value=${".0"}><span class="m3">°</span>
        <i class="sep wide"></i>${this.btn("mirrorH", "水平镜像", "hot")}${this.btn("mirrorV", "垂直镜像", "hot")}
        <i class="sep"></i>${this.btn("round", "圆角", "on")}${this.btn("scallop", "扇形角", "hot")}${this.btn("chamfer", "倒棱角", "hot")}
        <div class="pair fields f80 ml3">${this.spinField("左上圆角")}${this.spinField("左下圆角")}</div>
        ${this.corners("l")}<button class="tool on lockbtn" aria-label="同时编辑所有角">${icon("lock", 16)}</button>${this.corners("r")}
        <div class="pair fields f80">${this.spinField("右上圆角")}${this.spinField("右下圆角")}</div>
        <button class="tool on ml2" aria-label="相对角缩放">${icon("relative")}</button>
        <i class="sep"></i>${this.btn("wrap", "文本换行")}<i class="sep"></i>
        ${icon("pen", 18)}<span class="combo w88"><select aria-label="轮廓宽度"><option>无</option></select><span class="arrow xp">${icon("down", 14)}</span></span>
        <i class="sep"></i>${this.btn("curves", "转换为曲线")}
      </div>

      <main class="main">
        <div class="toolbox">${TOOLS.map(([n, label, kind]) => html`
          <button class=${classMap({ tool: true, hot: kind === "hot", on: n === this.tool })} aria-label=${label} @click=${() => (this.tool = n)}>
            ${n === "text" ? html`<span class="zi">字</span>` : icon(n)}</button>`)}
          <button class="tool" aria-label="交互式填充">${icon("fill")}</button></div>
        <div class="work">
          <div class="corner0">${icon("origin")}</div>
          <div class="hrule"><draw-ruler .zero=${468} .cursor=${740}></draw-ruler><span class="unit">毫米</span></div>
          <div class="vrule"><draw-ruler vertical .zero=${298} .cursor=${331}></draw-ruler><span class="vunit">毫米</span></div>
          <div class="canvas"><div class="sheet"><i class="h tl"></i><i class="h tr"></i><i class="h bl"></i><i class="h br"></i></div></div>
          <div class="vs"><button class="sb xp" aria-label="向上滚动">${icon("up", 14)}</button><div class="thumb"><i class="rib"></i></div>
            <button class="sb xp" aria-label="向下滚动">${icon("down", 14)}</button></div>
          <div class="nav">
            <button aria-label="添加页">${icon("addPage", 16)}</button><button aria-label="首页">${icon("first", 16)}</button><button aria-label="上一页">${icon("prev", 16)}</button>
            <span class="count">1 / 1</span>
            <button aria-label="下一页">${icon("next", 16)}</button><button aria-label="末页">${icon("last", 16)}</button><button aria-label="在后添加页">${icon("addPage", 16)}</button>
            <div class="tab"><span>页 1</span></div><span class="grow"></span><i class="split"></i>
            <div class="hs"><button class="sb xp" aria-label="向左滚动">${icon("left", 14)}</button><div class="thumb"><i class="rib v"></i></div>
              <button class="sb xp" aria-label="向右滚动">${icon("right", 14)}</button></div></div>
          <div>${icon("nav", 18)}</div>
        </div>
        <object-docker></object-docker>
        <color-palette></color-palette>
      </main>

      <footer class="status">
        <div class="left">
          <div class="line"><span>( 380.944, .906   )</span><button class="go" aria-label="坐标选项">${icon("play", 12)}</button><span>矩形 于 图层 1</span></div>
          <div class="line two"><span><span class="zh">文档颜色预置文件</span>: RGB: sRGB IEC61966-2.1; CMYK: Japan Color 2001 Coated; <span class="zh">灰度</span>: Dot Gain 15%</span>
            <button class="go" aria-label="颜色选项">${icon("play", 12)}</button></div>
        </div>
        <div class="pr">${icon("proof", 20)}</div>
        <div class="fills"><dl><dt>${icon("fill", 20)}</dt><dd>${icon("none", 18)}</dd><dd>无</dd><dt>${icon("pen", 20)}</dt><dd>${icon("none", 18)}</dd><dd>无</dd></dl>
          <span class="grip">${icon("grip", 18)}</span></div>
      </footer>

      <div class="badge"><b><svg width="23" height="13" aria-hidden="true"><path d="M5 1c4 3 8 3 14 0-3 3-4 5-4 9-2-4-6-6-10-9z" fill="#cfe2f8"/></svg></b><span>迅雷7</span></div>
    `;
  }
}
